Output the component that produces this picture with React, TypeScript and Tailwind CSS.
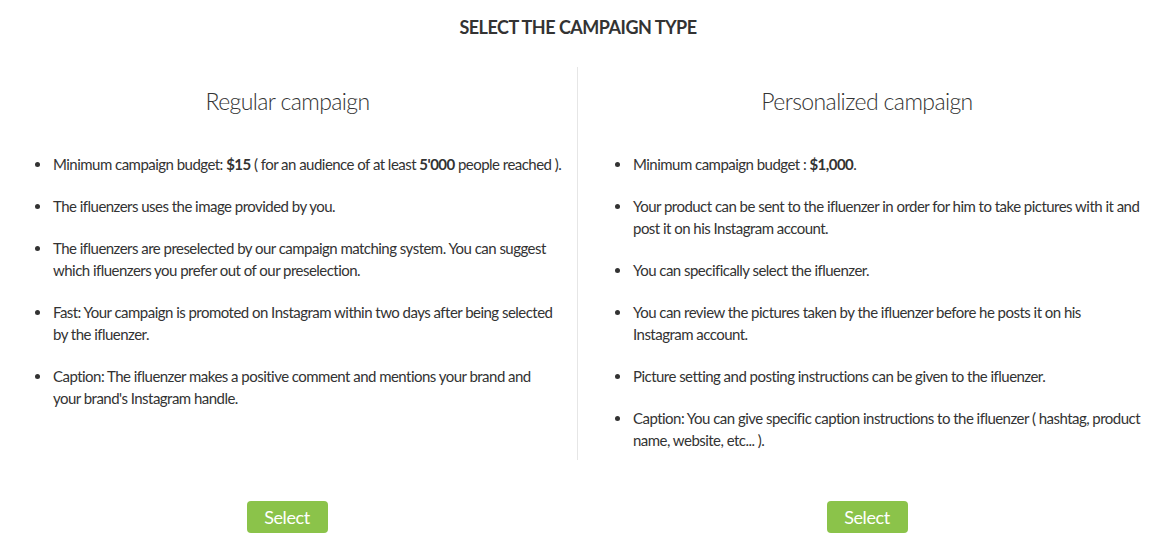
import React from "react";

const font = { fontFamily: 'Lato, "Open Sans", sans-serif' };

function Item({ children }: { children: React.ReactNode }) {
  return <li className="mb-[20px] leading-[22px] whitespace-nowrap pl-[1px]">{children}</li>;
}

function SelectButton() {
  return (
    <button className="w-[81px] h-[32px] rounded-[4px] bg-[#8bc34a] text-white text-[18px] font-normal tracking-[-0.4px] leading-[32px]">
      Select
    </button>
  );
}

export default function App() {
  return (
    <div className="w-[1156px] h-[550px] bg-white text-[#333] overflow-hidden" style={font}>
      <h1 className="pt-[14px] text-center text-[18px] font-bold tracking-[-0.5px] text-[#333] leading-[26px]">
        SELECT THE CAMPAIGN TYPE
      </h1>
      <div className="mt-[27px] flex">
        <div className="w-[578px] flex flex-col">
          <div className="h-[393px] border-r border-[#e6e6e6]">
            <h2 className="pt-[19px] pr-[2px] text-center text-[23px] font-light tracking-[-0.6px] leading-[30px]">Regular campaign</h2>
            <ul className="mt-[37px] list-disc pl-[52px] text-[15px] tracking-[-0.53px]">
              <Item>
                Minimum campaign budget: <b>$15</b> ( for an audience of at least <b>5'000</b> people reached ).
              </Item>
              <Item>The ifluenzers uses the image provided by you.</Item>
              <Item>
                The ifluenzers are preselected by our campaign matching system. You can suggest
                <br />
                which ifluenzers you prefer out of our preselection.
              </Item>
              <Item>
                Fast: Your campaign is promoted on Instagram within two days after being selected
                <br />
                by the ifluenzer.
              </Item>
              <Item>
                Caption: The ifluenzer makes a positive comment and mentions your brand and
                <br />
                your brand's Instagram handle.
              </Item>
            </ul>
          </div>
          <div className="mt-[41px] flex justify-center pr-[4px]">
            <SelectButton />
          </div>
        </div>
        <div className="w-[578px] flex flex-col">
          <div className="h-[393px]">
            <h2 className="pt-[19px] text-center text-[23px] font-light tracking-[-0.6px] leading-[30px]">Personalized campaign</h2>
            <ul className="mt-[37px] list-disc pl-[54px] text-[15px] tracking-[-0.53px]">
              <Item>
                Minimum campaign budget : <b>$1,000</b>.
              </Item>
              <Item>
                Your product can be sent to the ifluenzer in order for him to take pictures with it and
                <br />
                post it on his Instagram account.
              </Item>
              <Item>You can specifically select the ifluenzer.</Item>
              <Item>
                You can review the pictures taken by the ifluenzer before he posts it on his
                <br />
                Instagram account.
              </Item>
              <Item>Picture setting and posting instructions can be given to the ifluenzer.</Item>
              <Item>
                Caption: You can give specific caption instructions to the ifluenzer ( hashtag, product
                <br />
                name, website, etc... ).
              </Item>
            </ul>
          </div>
          <div className="mt-[41px] flex justify-center">
            <SelectButton />
          </div>
        </div>
      </div>
    </div>
  );
}
